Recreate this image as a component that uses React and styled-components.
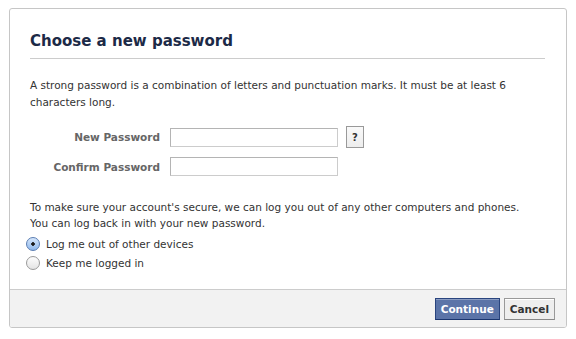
import React from 'react';
import styled, { createGlobalStyle } from 'styled-components';

const GlobalStyle = createGlobalStyle`
  body {
    margin: 0;
    background: #fff;
    font-family: "DejaVu Sans", "Lucida Grande", Tahoma, sans-serif;
    color: #333;
  }
`;

const Page = styled.div`
  padding: 8px 9px;
`;

const Dialog = styled.div`
  width: 556px;
  border: 1px solid #c6c6c6;
  border-radius: 3px;
  overflow: hidden;
  background: #fff;
`;

const Body = styled.div`
  padding: 20px 21px 19px 20px;
`;

const Title = styled.h2`
  margin: 0;
  padding: 3px 0 8px;
  font-size: 15px;
  font-weight: bold;
  color: #1c2a47;
  border-bottom: 1px solid #ccc;
`;

const Text = styled.p`
  margin: ${(p) => p.$margin || '0'};
  font-size: 10.5px;
  line-height: ${(p) => p.$lineHeight || '16px'};
  color: #333;
`;

const Form = styled.div`
  display: grid;
  grid-template-columns: 130px auto;
  column-gap: 10px;
  row-gap: 9px;
  margin: 15px 0 23px;
`;

const Label = styled.label`
  text-align: right;
  font-size: 10.5px;
  font-weight: bold;
  color: #666;
  align-self: center;
`;

const FieldRow = styled.div`
  display: flex;
  align-items: center;
  gap: 8px;
`;

const Input = styled.input`
  width: 160px;
  height: 13px;
  padding: 2px 3px;
  border: 1px solid #bdc7d8;
  border-color: #b4b4b4 #ccc #ccc #b4b4b4;
  font-size: 11px;
  margin: 0;
`;

const HelpButton = styled.button`
  width: 18px;
  height: 22px;
  padding: 0;
  border: 1px solid #999;
  background: linear-gradient(#f9f9f9, #ededed);
  font-family: inherit;
  font-size: 10px;
  font-weight: bold;
  color: #333;
`;

const Options = styled.div`
  display: flex;
  flex-direction: column;
  gap: 5px;
  margin-top: 6px;
`;

const Option = styled.label`
  display: flex;
  align-items: center;
  gap: 6px;
  font-size: 10.5px;
  color: #333;
  margin-left: -4px;
`;

const Radio = styled.span`
  width: 14px;
  height: 14px;
  border-radius: 50%;
  box-sizing: border-box;
  border: 1px solid #8a8a8a;
  background: ${(p) =>
    p.$checked
      ? 'radial-gradient(circle, #1a1a1a 0 1.5px, transparent 2px), linear-gradient(#d6e7fc, #8fb8ec)'
      : 'linear-gradient(#fdfdfd, #e4e4e4)'};
  border-color: ${(p) => (p.$checked ? '#5a7db2' : '#9a9a9a')};
`;

const Footer = styled.div`
  display: flex;
  justify-content: flex-end;
  gap: 4px;
  padding: 8px 11px 7px;
  background: #f2f2f2;
  border-top: 1px solid #ccc;
`;

const Button = styled.button`
  height: 22px;
  padding: 0 5px;
  font-family: inherit;
  font-size: 10.5px;
  font-weight: bold;
  border: 1px solid ${(p) => (p.$primary ? '#29447e' : '#999')};
  border-bottom-color: ${(p) => (p.$primary ? '#1a356e' : '#888')};
  color: ${(p) => (p.$primary ? '#fff' : '#333')};
  background: ${(p) => (p.$primary ? '#5b74a8' : '#eee')};
  box-shadow: inset 0 1px 0 ${(p) => (p.$primary ? '#8a9cc2' : '#fff')};
`;

export default function App() {
  return (
    <>
      <GlobalStyle />
      <Page>
        <Dialog>
          <Body>
            <Title>Choose a new password</Title>
            <Text $margin="18px 0 0" $lineHeight="17px">
              A strong password is a combination of letters and punctuation marks. It must be at least 6
              characters long.
            </Text>
            <Form>
              <Label>New Password</Label>
              <FieldRow>
                <Input type="password" />
                <HelpButton>?</HelpButton>
              </FieldRow>
              <Label>Confirm Password</Label>
              <FieldRow>
                <Input type="password" />
              </FieldRow>
            </Form>
            <Text>
              To make sure your account's secure, we can log you out of any other computers and phones.
              <br />
              You can log back in with your new password.
            </Text>
            <Options>
              <Option>
                <Radio $checked />
                Log me out of other devices
              </Option>
              <Option>
                <Radio />
                Keep me logged in
              </Option>
            </Options>
          </Body>
          <Footer>
            <Button $primary>Continue</Button>
            <Button>Cancel</Button>
          </Footer>
        </Dialog>
      </Page>
    </>
  );
}
